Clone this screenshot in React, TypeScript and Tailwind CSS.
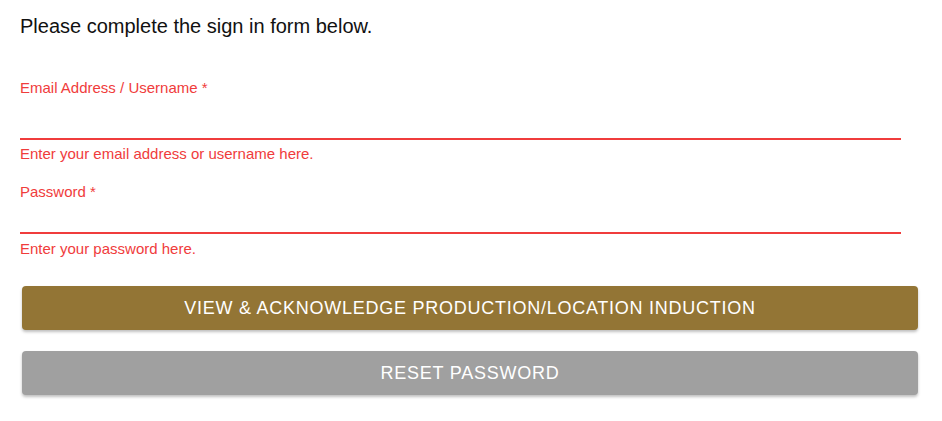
export default function App() {
  return (
    <div className="w-[942px] h-[421px] bg-white font-['Liberation_Sans',Arial,sans-serif]">
      <div className="pl-5 pr-[41px] pt-[14px]">
        <p className="text-[20px] leading-[24px] text-[#111]">Please complete the sign in form below.</p>

        <div className="mt-[42px]">
          <label className="block text-[15px] leading-[16px] text-[#f03c3c]">Email Address / Username *</label>
          <input type="text" className="block w-full h-[42px] outline-none bg-transparent" />
          <div className="h-[2px] bg-[#f03c3c]" />
          <p className="mt-[6px] text-[15px] leading-[16px] text-[#f03c3c]">Enter your email address or username here.</p>
        </div>

        <div className="mt-[22px]">
          <label className="block text-[15px] leading-[16px] text-[#f03c3c]">Password *</label>
          <input type="password" className="block w-full h-[32px] outline-none bg-transparent" />
          <div className="h-[2px] bg-[#f03c3c]" />
          <p className="mt-[7px] text-[15px] leading-[16px] text-[#f03c3c]">Enter your password here.</p>
        </div>
      </div>

      <div className="pl-[22px] pr-[24px] mt-[29px] flex flex-col gap-[21px]">
        <button className="h-[44px] w-full rounded bg-[#937535] text-white uppercase text-[18px] tracking-[0.75px] shadow-[0_2px_3px_rgba(0,0,0,0.25)]">
          View &amp; Acknowledge Production/Location Induction
        </button>
        <button className="h-[44px] w-full rounded bg-[#a0a0a0] text-white uppercase text-[18px] tracking-[0.75px] shadow-[0_2px_3px_rgba(0,0,0,0.25)]">
          Reset Password
        </button>
      </div>
    </div>
  )
}
